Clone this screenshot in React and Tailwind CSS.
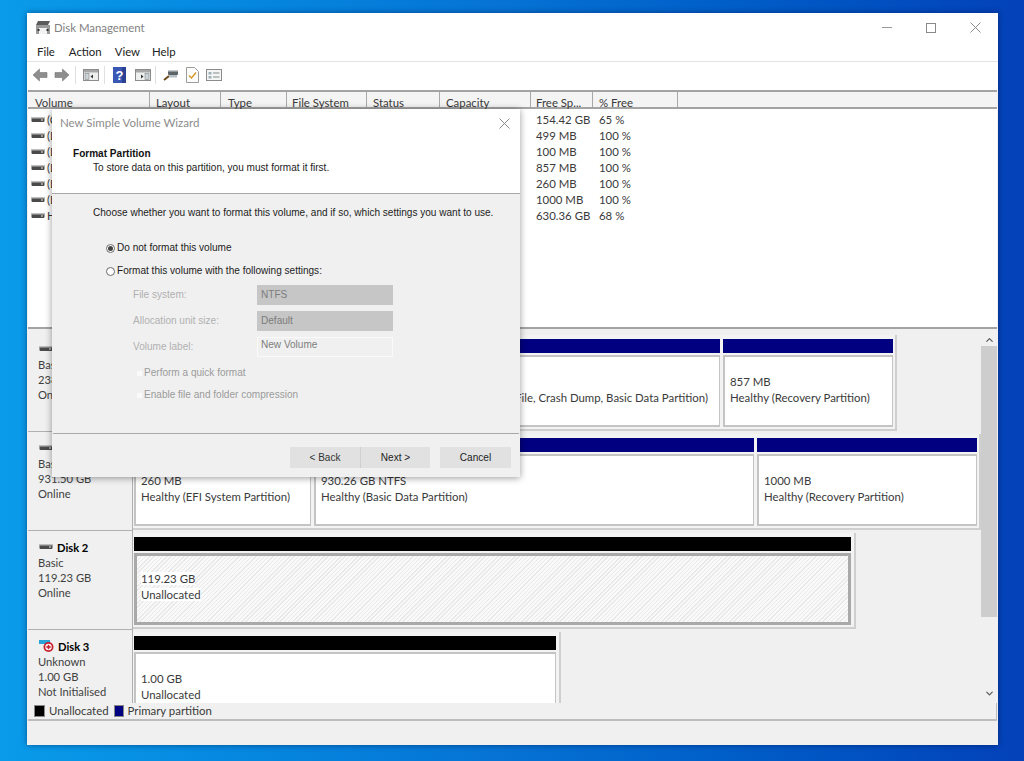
import React from "react";
import { ChevronUp, ChevronDown } from "lucide-react";

const columns = [
  { label: "Volume", w: "w-[122px]", pad: "pl-[7px]" },
  { label: "Layout", w: "w-[71px]", pad: "pl-[6px]" },
  { label: "Type", w: "w-[66px]", pad: "pl-[7px]" },
  { label: "File System", w: "w-[80px]", pad: "pl-[5px]" },
  { label: "Status", w: "w-[73px]", pad: "pl-[6px]" },
  { label: "Capacity", w: "w-[91px]", pad: "pl-[6px]" },
  { label: "Free Sp...", w: "w-[62px]", pad: "pl-[5px]" },
  { label: "% Free", w: "w-[85px]", pad: "pl-[6px]" },
];

// the columns between Volume and Free Space sit behind the wizard
const volumes = [
  ["(C:)", "154.42 GB", "65 %"],
  ["(D1", "499 MB", "100 %"],
  ["(D2", "100 MB", "100 %"],
  ["(D5", "857 MB", "100 %"],
  ["(E1", "260 MB", "100 %"],
  ["(E4", "1000 MB", "100 %"],
  ["HDD", "630.36 GB", "68 %"],
];

const disks = [
  {
    name: "Disk 0",
    info: ["Basic", "238.47 GB", "Online"],
    width: "w-[764px]",
    parts: [
      { w: "w-[586px]", lines: ["\u00a0", "Healthy (Boot, Page File, Crash Dump, Basic Data Partition)"], right: true },
      { w: "w-[170px]", lines: ["857 MB", "Healthy (Recovery Partition)"] },
    ],
  },
  {
    name: "Disk 1",
    info: ["Basic", "931.50 GB", "Online"],
    width: "w-[848px]",
    parts: [
      { w: "w-[177px]", lines: ["260 MB", "Healthy (EFI System Partition)"] },
      { w: "w-[440px]", lines: ["930.26 GB NTFS", "Healthy (Basic Data Partition)"] },
      { w: "w-[220px]", lines: ["1000 MB", "Healthy (Recovery Partition)"] },
    ],
  },
  {
    name: "Disk 2",
    info: ["Basic", "119.23 GB", "Online"],
    width: "w-[723px]",
    parts: [{ w: "w-[717px]", lines: ["119.23 GB", "Unallocated"], free: true }],
  },
  {
    name: "Disk 3",
    info: ["Unknown", "1.00 GB", "Not Initialised"],
    width: "w-[428px]",
    unknown: true,
    parts: [{ w: "w-[422px]", lines: ["1.00 GB", "Unallocated"], empty: true }],
  },
];

function DiskIcon() {
  return (
    <svg width="14" height="8" viewBox="0 0 14 8" className="shrink-0">
      <rect x="0.5" y="1" width="13" height="5" rx="1" fill="#4a4a4a" />
      <rect x="0.5" y="1" width="13" height="1.5" fill="#bdbdbd" />
      <rect x="10" y="3.5" width="2" height="1" fill="#e8e8e8" />
    </svg>
  );
}

function UnknownDiskIcon() {
  return (
    <svg width="15" height="14" viewBox="0 0 15 14" className="shrink-0">
      <rect x="0" y="1" width="11" height="4" fill="#2aa3d8" />
      <circle cx="9.5" cy="8" r="5" fill="#c8202e" />
      <circle cx="9.5" cy="8" r="3.2" fill="#fff" />
      <rect x="7.3" y="7.2" width="4.4" height="1.6" fill="#c8202e" />
      <rect x="8.7" y="5.8" width="1.6" height="4.4" fill="#c8202e" />
    </svg>
  );
}

function AppIcon() {
  return (
    <svg width="16" height="15" viewBox="0 0 16 15">
      <path d="M3 1h12l-2 4H1z" fill="#5b5b5b" />
      <rect x="1" y="5" width="14" height="9" fill="#9a9a9a" />
      <rect x="4" y="8" width="8" height="6" fill="#f2f2f2" />
      <rect x="2.5" y="9" width="2" height="2" fill="#333" />
      <rect x="11.5" y="9" width="2" height="2" fill="#333" />
    </svg>
  );
}

function Arrow({ flip }) {
  return (
    <svg width="16" height="14" viewBox="0 0 16 14" className={flip ? "-scale-x-100" : ""}>
      <path d="M7.5 1 1 7l6.5 6V9.5H15v-5H7.5z" fill="#8e8e8e" stroke="#777" strokeWidth="0.6" />
    </svg>
  );
}

function PaneIcon({ right }) {
  return (
    <svg width="16" height="14" viewBox="0 0 16 14">
      <rect x="0.5" y="1.5" width="15" height="11" fill="#eef0f0" stroke="#8b8b8b" />
      <rect x="1" y="2" width="14" height="2.5" fill="#a7a7a7" />
      <rect x={right ? 10 : 2} y="5.5" width="4" height="6" fill="#c9d3d8" stroke="#777" strokeWidth="0.5" />
      <path d={right ? "M6 6.5 8.5 8.5 6 10.5z" : "M10 6.5 7.5 8.5 10 10.5z"} fill="#333" />
    </svg>
  );
}

function HelpIcon() {
  return (
    <svg width="13" height="16" viewBox="0 0 13 16">
      <rect width="13" height="16" fill="#3a57b5" />
      <rect x="9" width="4" height="16" fill="#2b4191" />
      <text x="6.5" y="13" textAnchor="middle" fontSize="13" fontWeight="700" fill="#fff" fontFamily="Liberation Sans, sans-serif">?</text>
    </svg>
  );
}

function SearchDiskIcon() {
  return (
    <svg width="16" height="14" viewBox="0 0 16 14">
      <path d="M1 12 6 8" stroke="#6b4a1e" strokeWidth="2" />
      <rect x="5" y="2" width="10" height="5" rx="1" fill="#5c6468" />
      <rect x="5" y="2" width="10" height="1.5" fill="#c5cbce" />
      <rect x="6" y="7" width="8" height="2.5" fill="#b4bec4" />
    </svg>
  );
}

function CheckDocIcon() {
  return (
    <svg width="13" height="16" viewBox="0 0 13 16">
      <path d="M.5.5h8l4 4v11H.5z" fill="#fdfdfb" stroke="#9a9a9a" />
      <path d="M3 8.5 5.5 11 10 5.5" fill="none" stroke="#d99a2b" strokeWidth="1.5" />
    </svg>
  );
}

function ListIcon() {
  return (
    <svg width="16" height="14" viewBox="0 0 16 14">
      <rect x="0.5" y="1.5" width="15" height="11" fill="#f4f6f6" stroke="#8b8b8b" />
      <rect x="2.5" y="4" width="3" height="2.5" fill="#9fb0b8" />
      <rect x="2.5" y="8" width="3" height="2.5" fill="#9fb0b8" />
      <rect x="7" y="4.5" width="6.5" height="1" fill="#888" />
      <rect x="7" y="8.5" width="6.5" height="1" fill="#888" />
    </svg>
  );
}

function Partition({ part }) {
  const bar = part.free || part.empty ? "bg-black" : "bg-[#000080]";
  let box = "border-t-2 border-l-2 border-r border-b-2 border-[#c4c4c4] bg-white px-[5px] pt-[17px]";
  if (part.free) {
    box = "border-[3px] border-[#a9a9a9] px-[4px] pt-[15px] bg-[repeating-linear-gradient(135deg,#e9e9e9_0px,#e9e9e9_1px,#f9f9f9_1px,#f9f9f9_3px)]";
  }
  return (
    <div className={`${part.w} shrink-0 flex flex-col`}>
      <div className={`${bar} h-[14px] shrink-0`} />
      <div className={`${box} h-[72px] mt-[2px] shrink-0 text-[11.4px] leading-[16px] text-[#3a3a3a] whitespace-nowrap`}>
        {part.lines.map((l, i) => (
          <div key={l} className={part.right && i === 1 ? "text-right pr-[6px]" : ""}>
            <span className={part.free ? "bg-white" : ""}>{l}</span>
          </div>
        ))}
      </div>
    </div>
  );
}

function DiskRow({ disk }) {
  return (
    <div className="flex h-[99px] shrink-0">
      <div className="w-[105px] shrink-0 border-r border-b border-[#b0b0b0] pl-[10px] pt-[8px] text-[11.2px] leading-[15px] text-[#3f3f3f]">
        <div className="flex items-center gap-[4px] h-[16px] pl-[1px] font-bold text-black">
          {disk.unknown ? <UnknownDiskIcon /> : <DiskIcon />}
          <span>{disk.name}</span>
        </div>
        {disk.info.map((t) => (
          <div key={t}>{t}</div>
        ))}
      </div>
      <div className={`${disk.width} h-[96px] mt-[2px] border-r-2 border-b-2 border-[#cfcfcf] pl-[1px] pt-[4px] flex gap-[3px] bg-[#f3f3f3]`}>
        {disk.parts.map((p) => (
          <Partition key={p.lines[1]} part={p} />
        ))}
      </div>
    </div>
  );
}

function Radio({ checked, label }) {
  return (
    <div className="flex items-center gap-[2px] h-[14px] text-[#1c1c1c]">
      <span className="w-[9px] h-[9px] rounded-full border border-[#6a6a6a] bg-white flex items-center justify-center">
        {checked && <span className="w-[5px] h-[5px] rounded-full bg-[#444]" />}
      </span>
      {label}
    </div>
  );
}

function Field({ label, value, input }) {
  return (
    <div className="flex items-center h-[20px]">
      <span className="w-[124px] text-[#b0b0b0]">{label}</span>
      {input ? (
        <span className="w-[136px] h-[20px] border border-[#fafafa] pl-[3px] text-[#7d7d7d] leading-[14px]">{value}</span>
      ) : (
        <span className="w-[136px] h-[20px] bg-[#c6c6c6] pl-[4px] text-[#7d7d7d] leading-[20px]">{value}</span>
      )}
    </div>
  );
}

function Wizard() {
  return (
    <div className="absolute left-[25px] top-[96px] w-[468px] h-[368px] flex flex-col bg-[#f0f0f0] shadow-[0_1px_7px_rgba(0,0,0,0.4)] text-[10.05px] font-['Liberation_Sans',sans-serif]">
      <div className="h-[85px] bg-white border-b border-[#a8a8a8] shrink-0 relative">
        <div className="pl-[8px] pt-[7px] text-[11.5px] leading-[14px] text-[#8c8c8c] font-['Lato',sans-serif]">New Simple Volume Wizard</div>
        <svg width="11" height="11" viewBox="0 0 11 11" className="absolute right-[10px] top-[9px]">
          <path d="M.5.5l10 10M10.5.5l-10 10" stroke="#8a8a8a" strokeWidth="1" />
        </svg>
        <div className="pl-[21px] mt-[17px] font-bold leading-[13px] text-[#111]">Format Partition</div>
        <div className="pl-[41px] mt-[1px] leading-[14px] text-[#222]">To store data on this partition, you must format it first.</div>
      </div>
      <div className="pl-[41px] pt-[12px] leading-[14px] text-[#1c1c1c] whitespace-nowrap">Choose whether you want to format this volume, and if so, which settings you want to use.</div>
      <div className="pl-[54px] pt-[21px] flex flex-col gap-[9px]">
        <Radio checked label="Do not format this volume" />
        <Radio label="Format this volume with the following settings:" />
      </div>
      <div className="pl-[81px] pt-[7px] flex flex-col gap-[6px]">
        <Field label="File system:" value="NTFS" />
        <Field label="Allocation unit size:" value="Default" />
        <Field label="Volume label:" value="New Volume" input />
      </div>
      <div className="pl-[85px] pt-[9px] flex flex-col gap-[8px] text-[#9b9b9b]">
        <div className="flex items-center gap-[2px] h-[14px]">
          <span className="w-[5px] h-[5px] bg-[#fafafa]" />
          <span>Perform a quick format</span>
        </div>
        <div className="flex items-center gap-[2px] h-[14px]">
          <span className="w-[5px] h-[5px] bg-[#fafafa]" />
          <span>Enable file and folder compression</span>
        </div>
      </div>
      <div className="mt-[31px] mx-[1px] border-t border-[#a8a8a8] pt-[13px] pr-[8px] flex justify-end text-[#222]">
        <button className="w-[70px] h-[21px] bg-[#e1e1e1] text-[#333]">&lt; Back</button>
        <button className="w-[70px] h-[21px] bg-[#e1e1e1] border-l border-[#d0d0d0]">Next &gt;</button>
        <button className="w-[71px] h-[21px] bg-[#e1e1e1] ml-[10px]">Cancel</button>
      </div>
    </div>
  );
}

export default function App() {
  return (
    <div className="w-[1024px] h-[761px] overflow-hidden bg-gradient-to-r from-[#0a9bea] via-[#0672d4] to-[#0441b9] pt-[13px] pl-[27px] font-['Lato',sans-serif]">
      <div className="relative w-[971px] h-[732px] bg-[#f0f0f0] flex flex-col shadow-[0_0_6px_rgba(0,0,40,0.45)]">
        <div className="h-[29px] bg-white flex items-center shrink-0 pl-[8px] text-[11.4px] text-[#7f7f7f]">
          <AppIcon />
          <span className="ml-[3px]">Disk Management</span>
          <div className="ml-auto flex items-center">
            <span className="w-[10px] h-px bg-[#9a9a9a]" />
            <span className="w-[10px] h-[10px] ml-[34px] border border-[#8a8a8a]" />
            <svg width="11" height="11" viewBox="0 0 11 11" className="ml-[34px] mr-[17px]">
              <path d="M.5.5l10 10M10.5.5l-10 10" stroke="#8a8a8a" strokeWidth="1" />
            </svg>
          </div>
        </div>
        <div className="h-[20px] bg-white border-b border-[#e3e3e3] flex items-center pl-[10px] text-[11.4px] text-[#222] shrink-0">
          <span>File</span>
          <span className="ml-[14px]">Action</span>
          <span className="ml-[13px]">View</span>
          <span className="ml-[12px]">Help</span>
        </div>
        <div className="h-[28px] bg-white flex items-center pl-[5px] pb-[2px] shrink-0">
          <Arrow />
          <span className="ml-[6px]"><Arrow flip /></span>
          <span className="w-px h-[18px] bg-[#e0e0e0] ml-[5px]" />
          <span className="ml-[7px]"><PaneIcon /></span>
          <span className="w-px h-[18px] bg-[#e0e0e0] ml-[5px]" />
          <span className="ml-[8px]"><HelpIcon /></span>
          <span className="ml-[9px]"><PaneIcon right /></span>
          <span className="w-px h-[18px] bg-[#e0e0e0] ml-[4px]" />
          <span className="ml-[7px]"><SearchDiskIcon /></span>
          <span className="ml-[7px]"><CheckDocIcon /></span>
          <span className="ml-[7px]"><ListIcon /></span>
        </div>
        <div className="h-[19px] mx-[1px] bg-[#f4f4f4] border-t-2 border-b-2 border-[#a3a3a3] flex shrink-0 text-[11.4px] leading-[19px] text-[#3a3a3a]">
          {columns.map((c) => (
            <div key={c.label} className={`${c.w} ${c.pad} shrink-0 border-r border-[#a8a8a8] pt-[1px] h-[15px] whitespace-nowrap`}>
              {c.label}
            </div>
          ))}
        </div>
        <div className="h-[220px] mx-[1px] bg-white pt-[3px] shrink-0 border-b-2 border-[#a3a3a3] text-[11.4px] text-[#3a3a3a]">
          {volumes.map((v) => (
            <div key={v[0]} className="flex h-[16px] items-center">
              <div className="w-[503px] shrink-0 flex items-center gap-[2px] pl-[3px] whitespace-nowrap">
                <DiskIcon />
                {v[0]}
              </div>
              <div className="w-[62px] shrink-0 pl-[5px] whitespace-nowrap">{v[1]}</div>
              <div className="w-[85px] shrink-0 pl-[6px] whitespace-nowrap">{v[2]}</div>
            </div>
          ))}
        </div>
        <div className="h-[4px] shrink-0" />
        <div className="flex h-[370px] shrink-0 mx-[1px] overflow-hidden">
          <div className="flex-1 flex flex-col overflow-hidden">
            {disks.map((d) => (
              <DiskRow key={d.name} disk={d} />
            ))}
          </div>
          <div className="w-[16px] shrink-0 flex flex-col items-center">
            <ChevronUp size={11} strokeWidth={2.5} className="text-[#555] mt-[1px] h-[12px] shrink-0" />
            <div className="w-full h-[271px] bg-[#cdcdcd] shrink-0" />
            <div className="flex-1" />
            <ChevronDown size={11} strokeWidth={2.5} className="text-[#555] mb-[4px] shrink-0" />
          </div>
        </div>
        <div className="h-[18px] mx-[1px] border-b-2 border-r border-[#bdbdbd] flex items-center pl-[6px] text-[11.4px] text-[#3a3a3a] shrink-0 bg-[#f0f0f0]">
          <span className="w-[11px] h-[12px] bg-black border border-[#888]" />
          <span className="ml-[4px]">Unallocated</span>
          <span className="w-[10px] h-[12px] bg-[#000080] ml-[5px] border border-[#888]" />
          <span className="ml-[4px]">Primary partition</span>
        </div>
        <Wizard />
      </div>
    </div>
  );
}
